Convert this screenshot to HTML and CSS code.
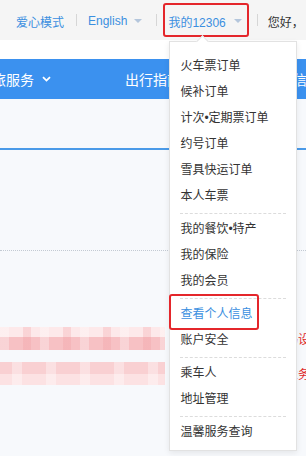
FILE: index.html
```html
<!DOCTYPE html>
<html lang="zh-CN">
<head>
    <meta charset="UTF-8">
    <title>我的12306</title>
    <link rel="stylesheet" href="styles.css">
</head>
<body>

    <div class="topbar">
        <a class="link">爱心模式</a>
        <span class="sep sep-1"></span>
        <a class="link">English<i class="arrow"></i></a>
        <span class="sep sep-2"></span>
        <div class="my">
            <a class="link">我的12306<i class="arrow"></i></a>
            <!-- 下拉菜单 -->
            <div class="menu">
                <a class="item">火车票订单</a>
                <a class="item">候补订单</a>
                <a class="item">计次•定期票订单</a>
                <a class="item">约号订单</a>
                <a class="item">雪具快运订单</a>
                <a class="item">本人车票</a>
                <div class="divider"></div>
                <a class="item">我的餐饮•特产</a>
                <a class="item">我的保险</a>
                <a class="item">我的会员</a>
                <div class="divider"></div>
                <a class="item active">查看个人信息</a>
                <a class="item">账户安全</a>
                <div class="divider"></div>
                <a class="item">乘车人</a>
                <a class="item">地址管理</a>
                <div class="divider"></div>
                <a class="item">温馨服务查询</a>
            </div>
        </div>
        <span class="sep sep-3"></span>
        <span class="hello">您好，</span>
    </div>

    <div class="gap"></div>

    <div class="nav">
        <span class="nav-item first">商旅服务</span>
        <svg class="chevron" width="9" height="6" viewBox="0 0 9 6"><path d="M1 1.2 L4.5 4.6 L8 1.2" fill="none" stroke="#fff" stroke-width="1.8"/></svg>
        <span class="nav-item guide">出行指南</span>
        <span class="nav-item query">信息查询</span>
    </div>

    <div class="band"></div>
    <div class="content">
        <div class="dotted"></div>
        <div class="row row-1">
            <div class="mosaic"></div>
            <span class="red">密码设置</span>
        </div>
        <div class="row row-2">
            <div class="mosaic"></div>
            <span class="red">办理业务</span>
        </div>
    </div>

</body>
</html>
```

FILE: styles.css
```css
html, body {
    margin: 0;
    overflow: hidden;
}
body {
    font-family: "Liberation Sans", "Noto Sans CJK SC", sans-serif;
    font-size: 12px;
    color: #333;
    background-color: #f7f9fc;
    height: 456px;
}
a {
    text-decoration: none;
}
.topbar {
    height: 40px;
    background-color: #f5f5f5;
    display: flex;
    align-items: center;
    padding-left: 16px;
    white-space: nowrap;
    position: relative;
    z-index: 5;
}
.topbar > * {
    flex-shrink: 0;
}
.link {
    color: #3b8fe0;
    display: flex;
    align-items: center;
    padding-top: 2px;
}
.arrow {
    display: inline-block;
    width: 0;
    height: 0;
    border-left: 4px solid transparent;
    border-right: 4px solid transparent;
    border-top: 4px solid #b4c6dc;
    margin-left: 7px;
}
.my .arrow {
    margin-left: 8px;
}
.sep {
    width: 1px;
    height: 12px;
    background-color: #d6d6d6;
}
.sep-1 { margin: 0 11px 0 12px; }
.sep-2 { margin: 0 6px 0 14px; }
.sep-3 { margin: 0 10px 0 8px; }
.my {
    position: relative;
    height: 34px;
    box-sizing: border-box;
    border: 2px solid #e4262b;
    border-radius: 3px;
    padding: 0 5px 0 3px;
    display: flex;
    align-items: center;
}
.hello {
    color: #333;
    padding-top: 2px;
}
.menu {
    position: absolute;
    left: 4px;
    top: 36px;
    width: 128px;
    box-sizing: border-box;
    background-color: #fff;
    border: 1px solid #e2e2e2;
    box-shadow: 0 2px 6px rgba(0, 0, 0, 0.08);
    padding: 11px 0 5px;
}
.menu::before {
    content: "";
    position: absolute;
    left: 28px;
    top: -5px;
    width: 8px;
    height: 8px;
    background-color: #fff;
    border-top: 1px solid #e2e2e2;
    border-left: 1px solid #e2e2e2;
    transform: rotate(45deg);
}
.item {
    display: block;
    position: relative;
    height: 26px;
    line-height: 26px;
    padding-left: 10px;
    color: #333;
}
.item.active {
    color: #3b8fe0;
}
.item.active::after {
    content: "";
    position: absolute;
    left: -1px;
    top: -7px;
    width: 90px;
    height: 36px;
    box-sizing: border-box;
    border: 2px solid #e4262b;
    border-radius: 3px;
}
.divider {
    border-top: 1px dashed #dcdcdc;
    margin: 4px 10px 2px;
}
.gap {
    height: 19px;
    background-color: #fff;
}
.nav {
    height: 40px;
    background-color: #3b91ef;
    display: flex;
    align-items: center;
    color: #fff;
    font-size: 14px;
    white-space: nowrap;
    overflow: hidden;
}
.nav > * {
    flex-shrink: 0;
}
.nav-item.first {
    margin-left: -22px;
}
.chevron {
    margin-left: 8px;
}
.nav-item.guide {
    margin-left: 74px;
}
.nav-item.query {
    margin-left: 112px;
}
.band {
    height: 49px;
    border-bottom: 2px solid #4a9ae8;
}
.content {
    padding-top: 100px;
}
.dotted {
    border-top: 1px dotted #c3cad3;
}
.row {
    display: flex;
    align-items: center;
    height: 23px;
    white-space: nowrap;
}
.row > * {
    flex-shrink: 0;
}
.row-1 {
    margin-top: 76px;
}
.row-2 {
    margin-top: 12px;
}
.mosaic {
    width: 165px;
    height: 23px;
}
.row-1 .mosaic {
    background:
        repeating-linear-gradient(to right, rgba(255, 255, 255, 0.3) 0 9px, transparent 9px 23px, rgba(240, 150, 155, 0.25) 23px 31px, transparent 31px 40px),
        linear-gradient(to bottom, #fde9ea 0 45%, #f7c1c4 45% 100%);
}
.row-2 .mosaic {
    background:
        repeating-linear-gradient(to right, transparent 0 12px, rgba(255, 255, 255, 0.35) 12px 22px, transparent 22px 34px),
        linear-gradient(to bottom, #f9d0d2 0 50%, #fce2e3 50% 100%);
}
.red {
    color: #e02a2a;
}
.row-1 .red {
    margin-left: 109px;
}
.row-2 .red {
    margin-left: 97px;
}
```
